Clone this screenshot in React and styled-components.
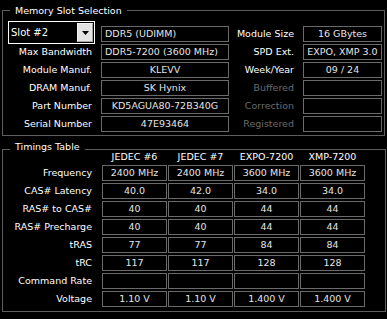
import React from "react";
import styled, { createGlobalStyle } from "styled-components";

const GlobalStyle = createGlobalStyle`
  html, body {
    margin: 0;
    background: #000;
  }
  body {
    font-family: "DejaVu Sans", Verdana, sans-serif;
    font-size: 9.5px;
    color: #fff;
  }
`;

const Panel = styled.div`
  width: 387px;
  height: 319px;
  box-sizing: border-box;
  padding: 10px 0 0 2px;
  background: #000;
  overflow: hidden;
`;

const Group = styled.section`
  width: ${(p) => p.$width}px;
  box-sizing: border-box;
  margin-top: ${(p) => p.$top || 0}px;
  padding: 0 2px ${(p) => p.$bottom}px 5px;
  border: 1px solid #5e5e5e;
`;

const GroupTitle = styled.div`
  width: fit-content;
  height: 12px;
  margin: ${(p) => -p.$lift}px 0 ${(p) => p.$lift - 12}px 2px;
  padding: 0 5px;
  line-height: 12px;
  background: #000;
  color: #fff;
  white-space: nowrap;
`;

const SlotGrid = styled.div`
  display: grid;
  grid-template-columns: 93px 128px 74px 79px;
  grid-auto-rows: 16px;
  row-gap: 2px;
  margin-top: 15px;
`;

const TimingGrid = styled.div`
  display: grid;
  grid-template-columns: 93px repeat(4, 65px);
  grid-template-rows: 13px repeat(8, 16px);
  column-gap: 1px;
  row-gap: 2px;
`;

const Label = styled.div`
  padding-right: 9px;
  line-height: 16px;
  text-align: right;
  white-space: nowrap;
  color: ${(p) => (p.$dim ? "#6a6a6a" : "#fff")};
`;

const Field = styled.div`
  height: 16px;
  box-sizing: border-box;
  padding: 0 ${(p) => (p.$left ? "3px" : "0")};
  border: 1px solid #6a6a6a;
  line-height: 14px;
  text-align: ${(p) => (p.$left ? "left" : "center")};
  color: #e4e4e4;
  white-space: nowrap;
  overflow: hidden;
`;

const ColHead = styled.div`
  line-height: 13px;
  text-align: center;
  color: #fff;
  white-space: nowrap;
`;

const Select = styled.div`
  grid-column: 1;
  grid-row: 1;
  width: 87px;
  height: 23px;
  margin-top: -5px;
  box-sizing: border-box;
  display: flex;
  align-items: center;
  justify-content: space-between;
  padding: 0 1px 0 2px;
  border: 1px solid #fff;
  background: #000;
  font-size: 10px;
  color: #fff;
`;

const ArrowButton = styled.div`
  width: 16px;
  height: 19px;
  box-sizing: border-box;
  display: flex;
  align-items: center;
  justify-content: center;
  background: #e3e3e3;
  border: 1px solid;
  border-color: #f4f4f4 #a6a6a6 #a6a6a6 #f4f4f4;
`;

const slotRows = [
  ["Max Bandwidth", "DDR5-7200 (3600 MHz)", "SPD Ext.", "EXPO, XMP 3.0", true],
  ["Module Manuf.", "KLEVV", "Week/Year", "09 / 24"],
  ["DRAM Manuf.", "SK Hynix", "Buffered", "", false, true],
  ["Part Number", "KD5AGUA80-72B340G", "Correction", "", false, true],
  ["Serial Number", "47E93464", "Registered", "", false, true],
];

const columns = ["JEDEC #6", "JEDEC #7", "EXPO-7200", "XMP-7200"];

const timings = [
  ["Frequency", "2400 MHz", "2400 MHz", "3600 MHz", "3600 MHz"],
  ["CAS# Latency", "40.0", "42.0", "34.0", "34.0"],
  ["RAS# to CAS#", "40", "40", "44", "44"],
  ["RAS# Precharge", "40", "40", "44", "44"],
  ["tRAS", "77", "77", "84", "84"],
  ["tRC", "117", "117", "128", "128"],
  ["Command Rate", "", "", "", ""],
  ["Voltage", "1.10 V", "1.10 V", "1.400 V", "1.400 V"],
];

export default function App() {
  return (
    <Panel>
      <GlobalStyle />
      <Group $width={383} $bottom={3}>
        <GroupTitle $lift={6}>Memory Slot Selection</GroupTitle>
        <SlotGrid>
          <Select>
            <span>Slot #2</span>
            <ArrowButton>
              <svg width="7" height="4" viewBox="0 0 7 4">
                <polygon points="0,0 7,0 3.5,4" fill="#000" />
              </svg>
            </ArrowButton>
          </Select>
          <Field $left>DDR5 (UDIMM)</Field>
          <Label>Module Size</Label>
          <Field>16 GBytes</Field>
          {slotRows.map(([label, value, side, sideValue, left, dim]) => (
            <React.Fragment key={label}>
              <Label>{label}</Label>
              <Field $left={left}>{value}</Field>
              <Label $dim={dim}>{side}</Label>
              <Field>{sideValue}</Field>
            </React.Fragment>
          ))}
        </SlotGrid>
      </Group>

      <Group $width={384} $top={13} $bottom={4}>
        <GroupTitle $lift={9}>Timings Table</GroupTitle>
        <TimingGrid>
          <span />
          {columns.map((c) => (
            <ColHead key={c}>{c}</ColHead>
          ))}
          {timings.map(([label, ...values]) => (
            <React.Fragment key={label}>
              <Label>{label}</Label>
              {values.map((v, i) => (
                <Field key={i}>{v}</Field>
              ))}
            </React.Fragment>
          ))}
        </TimingGrid>
      </Group>
    </Panel>
  );
}
